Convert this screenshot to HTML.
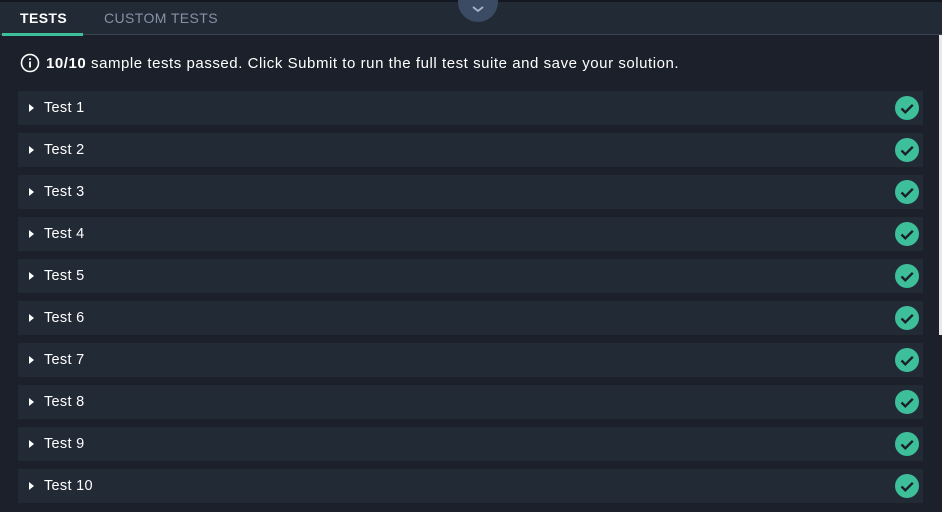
<!DOCTYPE html>
<html><head><style>
body{margin:0;width:942px;height:512px;background:#1b202a;overflow:hidden;font-family:"Liberation Sans",sans-serif;position:relative}
.top{position:absolute;left:0;top:0;width:942px;height:2px;background:#141820}
.tabs{position:absolute;left:0;top:2px;width:942px;height:32px;background:#222a36;border-bottom:1px solid #3a4352}
.tab{position:absolute;top:8px;font-size:14px;letter-spacing:.4px}
.t1{left:20px;color:#fff;font-weight:bold}
.t2{left:104px;color:#8592a4}
.ul{position:absolute;left:2px;top:31px;width:81px;height:3px;background:#3dbf9a}
.chev{position:absolute;left:458px;top:-18px;width:40px;height:40px;border-radius:50%;background:#3a4b63}
.sb{position:absolute;left:939px;top:35px;width:3px;height:300px;background:#e8e8e8}
.info{position:absolute;left:20px;top:53px;color:#fff;font-size:15px;letter-spacing:.55px;display:flex;align-items:center;gap:6px}
.row{position:absolute;left:18px;width:905px;height:34px;background:#222a36}
.row span{position:absolute;left:26px;top:9px;color:#fff;font-size:14.5px;letter-spacing:.3px}
.row .tri{position:absolute;left:11px;top:13px;width:0;height:0;border-left:5px solid #fff;border-top:4.5px solid transparent;border-bottom:4.5px solid transparent}
.row svg{position:absolute;left:877px;top:5px}
</style></head><body>
<div class="top"></div>
<div class="tabs"><div class="tab t1">TESTS</div><div class="tab t2">CUSTOM TESTS</div><div class="ul"></div></div>
<div class="chev"><svg width="40" height="40" style="position:absolute;left:0;top:0"><path d="M15 25l5 4 5-4" stroke="#aab6c8" stroke-width="1.8" fill="none"/></svg></div>
<div class="sb"></div>
<div class="info"><svg width="20" height="20"><circle cx="10" cy="10" r="8.5" stroke="#fff" stroke-width="1.6" fill="none"/><rect x="9.1" y="8.5" width="1.8" height="6" fill="#fff"/><rect x="9.1" y="5.2" width="1.8" height="1.8" fill="#fff"/></svg><span><b>10/10</b> sample tests passed. Click Submit to run the full test suite and save your solution.</span></div>
<div id="rows"></div>
<script>
var h='';for(var i=0;i<10;i++){h+='<div class="row" style="top:'+(91+i*42)+'px"><div class="tri"></div><span>Test '+(i+1)+'</span><svg width="24" height="24"><circle cx="12" cy="12" r="12" fill="#3dbf9a"/><path d="M6.5 12.5l3.8 3.8 7.5-7.5" stroke="#1b202a" stroke-width="2.4" fill="none"/></svg></div>';}
document.getElementById('rows').innerHTML=h;
</script>
</body></html>
